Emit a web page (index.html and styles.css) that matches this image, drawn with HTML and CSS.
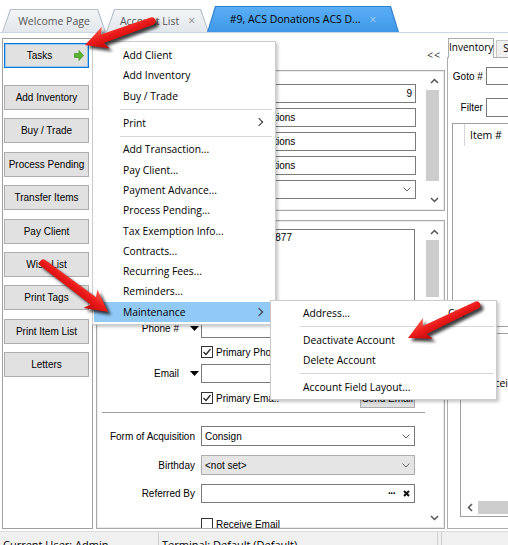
FILE: index.html
```html
<!DOCTYPE html>
<html lang="en">

<head>
	<meta charset="utf-8">
	<title>#9, ACS Donations</title>
	<link rel="stylesheet" href="styles.css">
</head>

<body>
	<div class="app">
		<nav class="doc-tabs">
			<div class="doc-tab tab-welcome">Welcome Page</div>
			<div class="doc-tab tab-list">Account List <span class="tab-close">×</span></div>
			<div class="doc-tab tab-account">#9, ACS Donations ACS D... <span class="tab-close">×</span></div>
		</nav>

		<div class="workspace">
			<aside class="task-bar">
				<button class="task-btn tasks-toggle">
					<span>Tasks</span>
					<svg width="10" height="11" viewBox="0 0 10 11">
						<path d="M0.5 3.5H5V0.5L9.5 5.5L5 10.5V7.5H0.5Z" fill="#5cb531" stroke="#3f8f20" stroke-width="0.7" />
					</svg>
				</button>
				<div class="task-list">
					<button class="task-btn">Add Inventory</button>
					<button class="task-btn">Buy / Trade</button>
					<button class="task-btn">Process Pending</button>
					<button class="task-btn">Transfer Items</button>
					<button class="task-btn">Pay Client</button>
					<button class="task-btn">Wish List</button>
					<button class="task-btn">Print Tags</button>
					<button class="task-btn">Print Item List</button>
					<button class="task-btn">Letters</button>
				</div>
			</aside>

			<main class="account">
				<div class="collapse-row"><span>&lt;&lt;</span></div>

				<section class="panel panel-summary">
					<div class="panel-body summary">
						<div class="s-row"><span class="s-label"></span><div class="field num">9</div></div>
						<div class="s-row"><span class="s-label"></span><div class="field">ACS Donations</div></div>
						<div class="s-row"><span class="s-label"></span><div class="field">ACS Donations</div></div>
						<div class="s-row"><span class="s-label"></span><div class="field">ACS Donations</div></div>
						<div class="s-row"><span class="s-label"></span>
							<div class="field combo"><span></span>
								<svg width="8" height="5" viewBox="0 0 8 5"><path d="M0.5 0.5L4 4L7.5 0.5" fill="none" stroke="#666" /></svg>
							</div>
						</div>
					</div>
					<div class="vscroll vs-summary">
						<span class="sb-arrow"><svg width="9" height="6" viewBox="0 0 9 6"><path d="M1 5L4.5 1.5L8 5" fill="none" stroke="#555" stroke-width="1.5" /></svg></span>
						<span class="sb-thumb"></span>
						<span class="sb-arrow sb-end"><svg width="9" height="6" viewBox="0 0 9 6"><path d="M1 1L4.5 4.5L8 1" fill="none" stroke="#555" stroke-width="1.5" /></svg></span>
					</div>
				</section>

				<section class="panel panel-details">
					<div class="panel-body details">
						<div class="d-row"><span class="d-label"></span><div class="field memo">Tel (555) 123-4877</div></div>

						<div class="d-row row-phone">
							<span class="d-label">Phone #<svg class="pick" width="9" height="5" viewBox="0 0 9 5"><path d="M0 0H9L4.5 5Z" /></svg></span>
							<div class="field"></div>
						</div>
						<div class="d-row row-check"><span class="check on"></span>Primary Phone</div>

						<div class="d-row row-email">
							<span class="d-label">Email<svg class="pick" width="9" height="5" viewBox="0 0 9 5"><path d="M0 0H9L4.5 5Z" /></svg></span>
							<div class="field"></div>
						</div>
						<div class="d-row row-check row-send">
							<span class="check on"></span>Primary Ema..
							<button class="small-btn">Send Email</button>
						</div>

						<div class="divider"></div>

						<div class="d-row row-acq">
							<span class="d-label">Form of Acquisition</span>
							<div class="field combo"><span>Consign</span>
								<svg width="8" height="5" viewBox="0 0 8 5"><path d="M0.5 0.5L4 4L7.5 0.5" fill="none" stroke="#666" /></svg>
							</div>
						</div>
						<div class="d-row row-bday">
							<span class="d-label">Birthday</span>
							<div class="field combo locked"><span>&lt;not set&gt;</span>
								<svg width="8" height="5" viewBox="0 0 8 5"><path d="M0.5 0.5L4 4L7.5 0.5" fill="none" stroke="#666" /></svg>
							</div>
						</div>
						<div class="d-row row-ref">
							<span class="d-label">Referred By</span>
							<div class="field combo"><span></span>
								<span class="lookup">···</span>
								<svg width="7" height="7" viewBox="0 0 7 7"><path d="M1 1L6 6M6 1L1 6" stroke="#111" stroke-width="2" /></svg>
							</div>
						</div>
						<div class="d-row row-check row-receive"><span class="check"></span>Receive Email</div>
					</div>
					<div class="vscroll vs-details">
						<span class="sb-arrow"><svg width="9" height="6" viewBox="0 0 9 6"><path d="M1 5L4.5 1.5L8 5" fill="none" stroke="#555" stroke-width="1.5" /></svg></span>
						<span class="sb-thumb"></span>
						<span class="sb-arrow sb-end"><svg width="9" height="6" viewBox="0 0 9 6"><path d="M1 1L4.5 4.5L8 1" fill="none" stroke="#555" stroke-width="1.5" /></svg></span>
					</div>
				</section>
			</main>

			<div class="splitter"></div>

			<aside class="side">
				<div class="side-tabs">
					<div class="side-tab active">Inventory</div>
					<div class="side-tab">Sales</div>
				</div>
				<div class="side-page">
					<div class="side-row"><span class="side-label">Goto #</span><div class="field"></div></div>
					<div class="side-row row-filter"><span class="side-label">Filter</span><div class="field"></div></div>
					<div class="grid">
						<div class="grid-head"><span class="grid-corner"></span><span>Item #</span></div>
					</div>
					<div class="grid receipts">
						<span class="receipts-title">Receipts</span>
						<div class="hscroll">
							<svg width="6" height="9" viewBox="0 0 6 9"><path d="M5 1L1.5 4.5L5 8" fill="none" stroke="#555" stroke-width="1.5" /></svg>
							<span class="hs-thumb"></span>
						</div>
					</div>
				</div>
			</aside>
		</div>

		<footer class="status">
			<span class="st-cell st-user">Current User: Admin</span>
			<span class="st-cell st-term">Terminal: Default (Default)</span>
			<span class="st-cell"></span>
		</footer>

		<!-- Tasks drop-down -->
		<div class="menu tasks-menu">
			<div class="menu-item">Add Client</div>
			<div class="menu-item">Add Inventory</div>
			<div class="menu-item">Buy / Trade</div>
			<div class="menu-sep"></div>
			<div class="menu-item has-sub">Print</div>
			<div class="menu-sep"></div>
			<div class="menu-item">Add Transaction...</div>
			<div class="menu-item">Pay Client...</div>
			<div class="menu-item">Payment Advance...</div>
			<div class="menu-item">Process Pending...</div>
			<div class="menu-item">Tax Exemption Info...</div>
			<div class="menu-item">Contracts...</div>
			<div class="menu-item">Recurring Fees...</div>
			<div class="menu-item">Reminders...</div>
			<div class="menu-item has-sub hot">Maintenance</div>
		</div>

		<!-- Maintenance sub menu -->
		<div class="menu sub-menu">
			<div class="menu-item">Address...<span class="shortcut">Ctrl</span></div>
			<div class="menu-sep"></div>
			<div class="menu-item">Deactivate Account</div>
			<div class="menu-item">Delete Account</div>
			<div class="menu-sep"></div>
			<div class="menu-item">Account Field Layout...</div>
		</div>

		<svg class="callouts" width="508" height="545" viewBox="0 0 508 545">
			<defs>
				<linearGradient id="red-up" x1="0" y1="-11" x2="0" y2="11" gradientUnits="userSpaceOnUse">
					<stop offset="0" stop-color="#ff5b4c" />
					<stop offset="0.45" stop-color="#ec1b1b" />
					<stop offset="1" stop-color="#c00707" />
				</linearGradient>
				<linearGradient id="red-down" x1="0" y1="11" x2="0" y2="-11" gradientUnits="userSpaceOnUse">
					<stop offset="0" stop-color="#ff5b4c" />
					<stop offset="0.45" stop-color="#ec1b1b" />
					<stop offset="1" stop-color="#c00707" />
				</linearGradient>
				<filter id="soft" x="-30%" y="-60%" width="160%" height="220%">
					<feGaussianBlur stdDeviation="1.6" />
				</filter>
				<path id="arrow-tasks" d="M0 0L-22 -11.5L-18.5 -4.5L-71 -3.8A3.8 3.8 0 0 0 -71 3.8L-18.5 4.5L-22 11.5Z" />
				<path id="arrow-maint" d="M0 0L-22 -11.5L-18.5 -4.5L-81 -3.8A3.8 3.8 0 0 0 -81 3.8L-18.5 4.5L-22 11.5Z" />
				<path id="arrow-deact" d="M0 0L-22 -11.5L-18.5 -4.5L-76 -3.8A3.8 3.8 0 0 0 -76 3.8L-18.5 4.5L-22 11.5Z" />
			</defs>

			<g transform="translate(88 48) rotate(160.3)"><use href="#arrow-tasks" fill="#000" opacity="0.75" filter="url(#soft)" /></g>
			<g transform="translate(85 45) rotate(160.3)"><use href="#arrow-tasks" fill="url(#red-down)" /></g>

			<g transform="translate(111 315) rotate(37)"><use href="#arrow-maint" fill="#000" opacity="0.75" filter="url(#soft)" /></g>
			<g transform="translate(108 312) rotate(37)"><use href="#arrow-maint" fill="url(#red-up)" /></g>

			<g transform="translate(411 341) rotate(154.4)"><use href="#arrow-deact" fill="#000" opacity="0.75" filter="url(#soft)" /></g>
			<g transform="translate(408 338) rotate(154.4)"><use href="#arrow-deact" fill="url(#red-down)" /></g>
		</svg>
	</div>
</body>

</html>
```

FILE: styles.css
```css
* {
	box-sizing: border-box;
}

html,
body {
	margin: 0;
	padding: 0;
}

body {
	width: 508px;
	height: 545px;
	overflow: hidden;
	background: #fff;
	font-family: "Liberation Sans", Arial, sans-serif;
	font-size: 10px;
	color: #000;
}

.app {
	position: relative;
	width: 508px;
	height: 545px;
	display: flex;
	flex-direction: column;
	overflow: hidden;
}

/* ---- document tabs ---- */

.doc-tabs {
	flex: none;
	height: 33px;
	display: flex;
	align-items: flex-end;
	padding-left: 2px;
	border-bottom: 1px solid #cdd7e1;
	font-family: "Open Sans", sans-serif;
	font-size: 10.5px;
}

.doc-tab {
	position: relative;
	z-index: 0;
	height: 23px;
	display: flex;
	align-items: center;
	justify-content: center;
	gap: 9px;
	color: #555;
}

.doc-tab::before,
.doc-tab::after {
	content: '';
	position: absolute;
	z-index: -1;
	clip-path: polygon(8px 0, calc(100% - 8px) 0, 100% 100%, 0 100%);
}

.doc-tab::before {
	inset: 0;
	background: #b7c2cc;
}

.doc-tab::after {
	inset: 1px 1px 0;
	background: linear-gradient(#f3f5f7, #e2e7ec);
}

.tab-welcome {
	width: 104px;
}

.tab-list {
	width: 103px;
}

.tab-account {
	width: 192px;
	height: 26px;
	margin-left: -2px;
	color: #000;
}

.tab-account::before {
	background: #2f7fd0;
}

.tab-account::after {
	background: linear-gradient(#5aaef4, #3f98e8);
}

.tab-close {
	font-size: 12px;
	color: #8a8a8a;
}

.tab-account .tab-close {
	color: #a9cdee;
}

/* ---- workspace ---- */

.workspace {
	flex: none;
	height: 498px;
	display: flex;
	padding: 5px 0 2px 2px;
}

.task-bar {
	flex: none;
	width: 91px;
	border: 1px solid #a0a0a0;
	padding: 4px 0 0 1px;
}

.task-btn {
	display: flex;
	align-items: center;
	justify-content: center;
	width: 85px;
	height: 25px;
	padding: 0;
	border: 1px solid #adadad;
	background: #e1e1e1;
	font-family: "Liberation Sans", Arial, sans-serif;
	font-size: 10px;
	color: #000;
}

.tasks-toggle {
	border-color: #0078d7;
	box-shadow: inset 0 0 0 1px #9cc6ec;
	padding-right: 4px;
}

.tasks-toggle span {
	flex: 1;
	text-align: center;
}

.task-list {
	display: flex;
	flex-direction: column;
	gap: 8.4px;
	margin-top: 17px;
}

.account {
	flex: none;
	width: 349px;
	margin-left: 3px;
	display: flex;
	flex-direction: column;
}

.collapse-row {
	flex: none;
	height: 32px;
	display: flex;
	justify-content: flex-end;
	align-items: center;
	padding: 2px 4px 0 0;
	font-family: "Open Sans", sans-serif;
	font-size: 10.5px;
	letter-spacing: 1px;
	color: #333;
}

.panel {
	display: flex;
	border: 1px solid #a9a9a9;
	box-shadow: inset 0 0 0 1px #ececec;
}

.panel-summary {
	flex: none;
	height: 141px;
}

.panel-details {
	flex: 1;
	min-height: 0;
	margin-top: 9px;
	overflow: hidden;
}

.panel-body {
	flex: 1;
	display: flex;
	flex-direction: column;
	min-width: 0;
}

/* text boxes */

.field {
	height: 19px;
	display: flex;
	align-items: center;
	padding: 0 3px;
	border: 1px solid #7a7a7a;
	background: #fff;
	white-space: nowrap;
	overflow: hidden;
}

.field.num {
	justify-content: flex-end;
}

.combo span:first-child {
	flex: 1;
}

.combo svg {
	margin-right: 1px;
}

.combo.locked {
	background: #e5e5e5;
	border-color: #adadad;
}

.lookup {
	margin-right: 8px;
	font-weight: bold;
	letter-spacing: -1px;
}

.summary {
	padding-top: 13px;
	gap: 5px;
}

.s-row {
	display: flex;
	align-items: center;
}

.s-label {
	width: 126px;
}

.s-row .field {
	width: 193px;
}

.details {
	padding-top: 8px;
}

.d-row {
	display: flex;
	align-items: center;
	flex: none;
}

.d-label {
	width: 104px;
	display: flex;
	justify-content: flex-end;
	align-items: center;
	padding-right: 6px;
}

.d-row .field {
	width: 214px;
}

.d-row .field.memo {
	height: 84px;
	align-items: flex-start;
	padding: 2px 6px;
}

.pick {
	margin: 0 -4px 0 11px;
}

.row-phone {
	margin-top: 6px;
}

.row-email {
	margin-top: 6px;
}

.row-check {
	height: 12px;
	margin-top: 8px;
	padding-left: 104px;
	white-space: nowrap;
}

.check {
	width: 12px;
	height: 12px;
	margin-right: 3px;
	border: 1px solid #333;
	background: #fff;
}

.check.on {
	background: #fff url("data:image/svg+xml,%3Csvg xmlns='http://www.w3.org/2000/svg' width='10' height='10'%3E%3Cpath d='M1.5 5L4 7.5L8.5 2' fill='none' stroke='%23222' stroke-width='1.2'/%3E%3C/svg%3E") center no-repeat;
}

.row-send {
	height: 20px;
	margin-top: 5px;
}

.small-btn {
	width: 55px;
	height: 19px;
	margin-left: auto;
	margin-right: 11px;
	padding: 0;
	border: 1px solid #adadad;
	background: #e1e1e1;
	font-family: "Liberation Sans", Arial, sans-serif;
	font-size: 10px;
}

.divider {
	flex: none;
	height: 1px;
	margin: 4px 1px 0 5px;
	background: #a0a0a0;
}

.row-acq {
	margin-top: 13px;
}

.row-acq .field,
.row-bday .field {
	height: 20px;
}

.row-bday,
.row-ref {
	margin-top: 9px;
}

.row-receive {
	margin-top: 15px;
}

/* scroll bars */

.vscroll {
	flex: none;
	width: 14px;
	margin-right: 4px;
	display: flex;
	flex-direction: column;
	align-items: center;
}

.sb-arrow {
	flex: none;
	height: 16px;
	display: flex;
	align-items: center;
	justify-content: center;
	padding-left: 3px;
}

.sb-end {
	margin-top: auto;
}

.sb-thumb {
	flex: none;
	width: 13px;
	margin-right: 1px;
	background: #cdcdcd;
}

.vs-summary {
	padding: 2px 0 2px;
}

.vs-summary .sb-thumb {
	height: 91px;
	margin-top: 1px;
}

.vs-details {
	padding: 3px 0 2px;
}

.vs-details .sb-thumb {
	height: 57px;
}

.splitter {
	flex: none;
	width: 2px;
}

/* inventory side panel */

.side {
	flex: none;
	width: 75px;
	display: flex;
	flex-direction: column;
}

.side-tabs {
	flex: none;
	height: 19px;
	display: flex;
	align-items: flex-end;
	font-family: "Open Sans", sans-serif;
	font-size: 10px;
}

.side-tab {
	height: 17px;
	margin-left: 2px;
	padding: 0 6px;
	border: 1px solid #c8c8c8;
	border-bottom: none;
	background: #f0f0f0;
}

.side-tab.active {
	position: relative;
	z-index: 1;
	width: 55px;
	height: 20px;
	margin: 0 0 -1px 1px;
	padding: 1px 0 0;
	text-align: center;
	border-color: #adadad;
	background: #fff;
}

.side-page {
	flex: 1;
	display: flex;
	flex-direction: column;
	padding-top: 9px;
	border: 1px solid #adadad;
}

.side-row {
	display: flex;
	align-items: center;
}

.side-label {
	width: 41px;
	margin-right: 3px;
	text-align: right;
}

.side-row .field {
	width: 40px;
	height: 18px;
}

.row-filter {
	margin-top: 13px;
}

.row-filter .field {
	height: 19px;
}

.grid {
	flex: none;
	height: 204px;
	margin: 6px 0 0 4px;
	border: 1px solid #a0a0a0;
}

.grid-head {
	height: 22px;
	display: flex;
	align-items: center;
	font-family: "Open Sans", sans-serif;
	font-size: 10.5px;
}

.grid-corner {
	align-self: stretch;
	width: 12px;
	margin-right: 5px;
	border-right: 1px solid #d5d5d5;
}

.receipts {
	height: 184px;
	margin-left: 12px;
	display: flex;
	flex-direction: column;
}

.receipts-title {
	margin: 42px 0 0 21px;
	font-family: "Open Sans", sans-serif;
	font-size: 10.5px;
}

.hscroll {
	margin-top: auto;
	margin-bottom: 2px;
	height: 13px;
	display: flex;
	align-items: center;
	padding-left: 6px;
	gap: 5px;
}

.hs-thumb {
	flex: 1;
	align-self: stretch;
	background: #cdcdcd;
}

/* status bar */

.status {
	flex: none;
	height: 14px;
	display: flex;
	border-top: 1px solid #dcdcdc;
	background: #f0f0f0;
	font-family: "Open Sans", sans-serif;
	font-size: 11px;
	line-height: 14px;
	overflow: hidden;
}

.st-cell {
	padding: 6px 0 0 3px;
	border-right: 1px solid #cfcfcf;
	white-space: nowrap;
}

.st-user {
	width: 159px;
}

.st-term {
	width: 279px;
}

/* context menus */

.menu {
	position: absolute;
	background: #fff;
	border: 1px solid #cccccc;
	box-shadow: 2px 2px 3px rgba(0, 0, 0, 0.22);
	font-family: "Open Sans", sans-serif;
	font-size: 10.3px;
}

.menu-item {
	position: relative;
	height: 20.3px;
	display: flex;
	align-items: center;
	padding-left: 29px;
	white-space: nowrap;
}

.menu-item.has-sub::after {
	content: '';
	position: absolute;
	right: 10px;
	top: 7px;
	width: 5px;
	height: 5px;
	border-top: 1px solid #333;
	border-right: 1px solid #333;
	transform: rotate(45deg);
}

.menu-item.hot {
	background: #91c9f7;
}

.menu-sep {
	height: 6.5px;
	position: relative;
}

.menu-sep::after {
	content: '';
	position: absolute;
	top: 3px;
	left: 26px;
	right: 0;
	height: 1px;
	background: #d7d7d7;
}

.tasks-menu {
	left: 92px;
	top: 41px;
	width: 184px;
	padding: 3px 3px 2px 1px;
}

.sub-menu {
	left: 270px;
	top: 300px;
	width: 227px;
	padding: 2px 1px 2px 1px;
}

.sub-menu .menu-item {
	padding-left: 31px;
}

.sub-menu .menu-sep::after {
	left: 28px;
	right: 1px;
}

.shortcut {
	position: absolute;
	left: 176px;
}

.callouts {
	position: absolute;
	top: 0;
	left: 0;
	pointer-events: none;
}
```
